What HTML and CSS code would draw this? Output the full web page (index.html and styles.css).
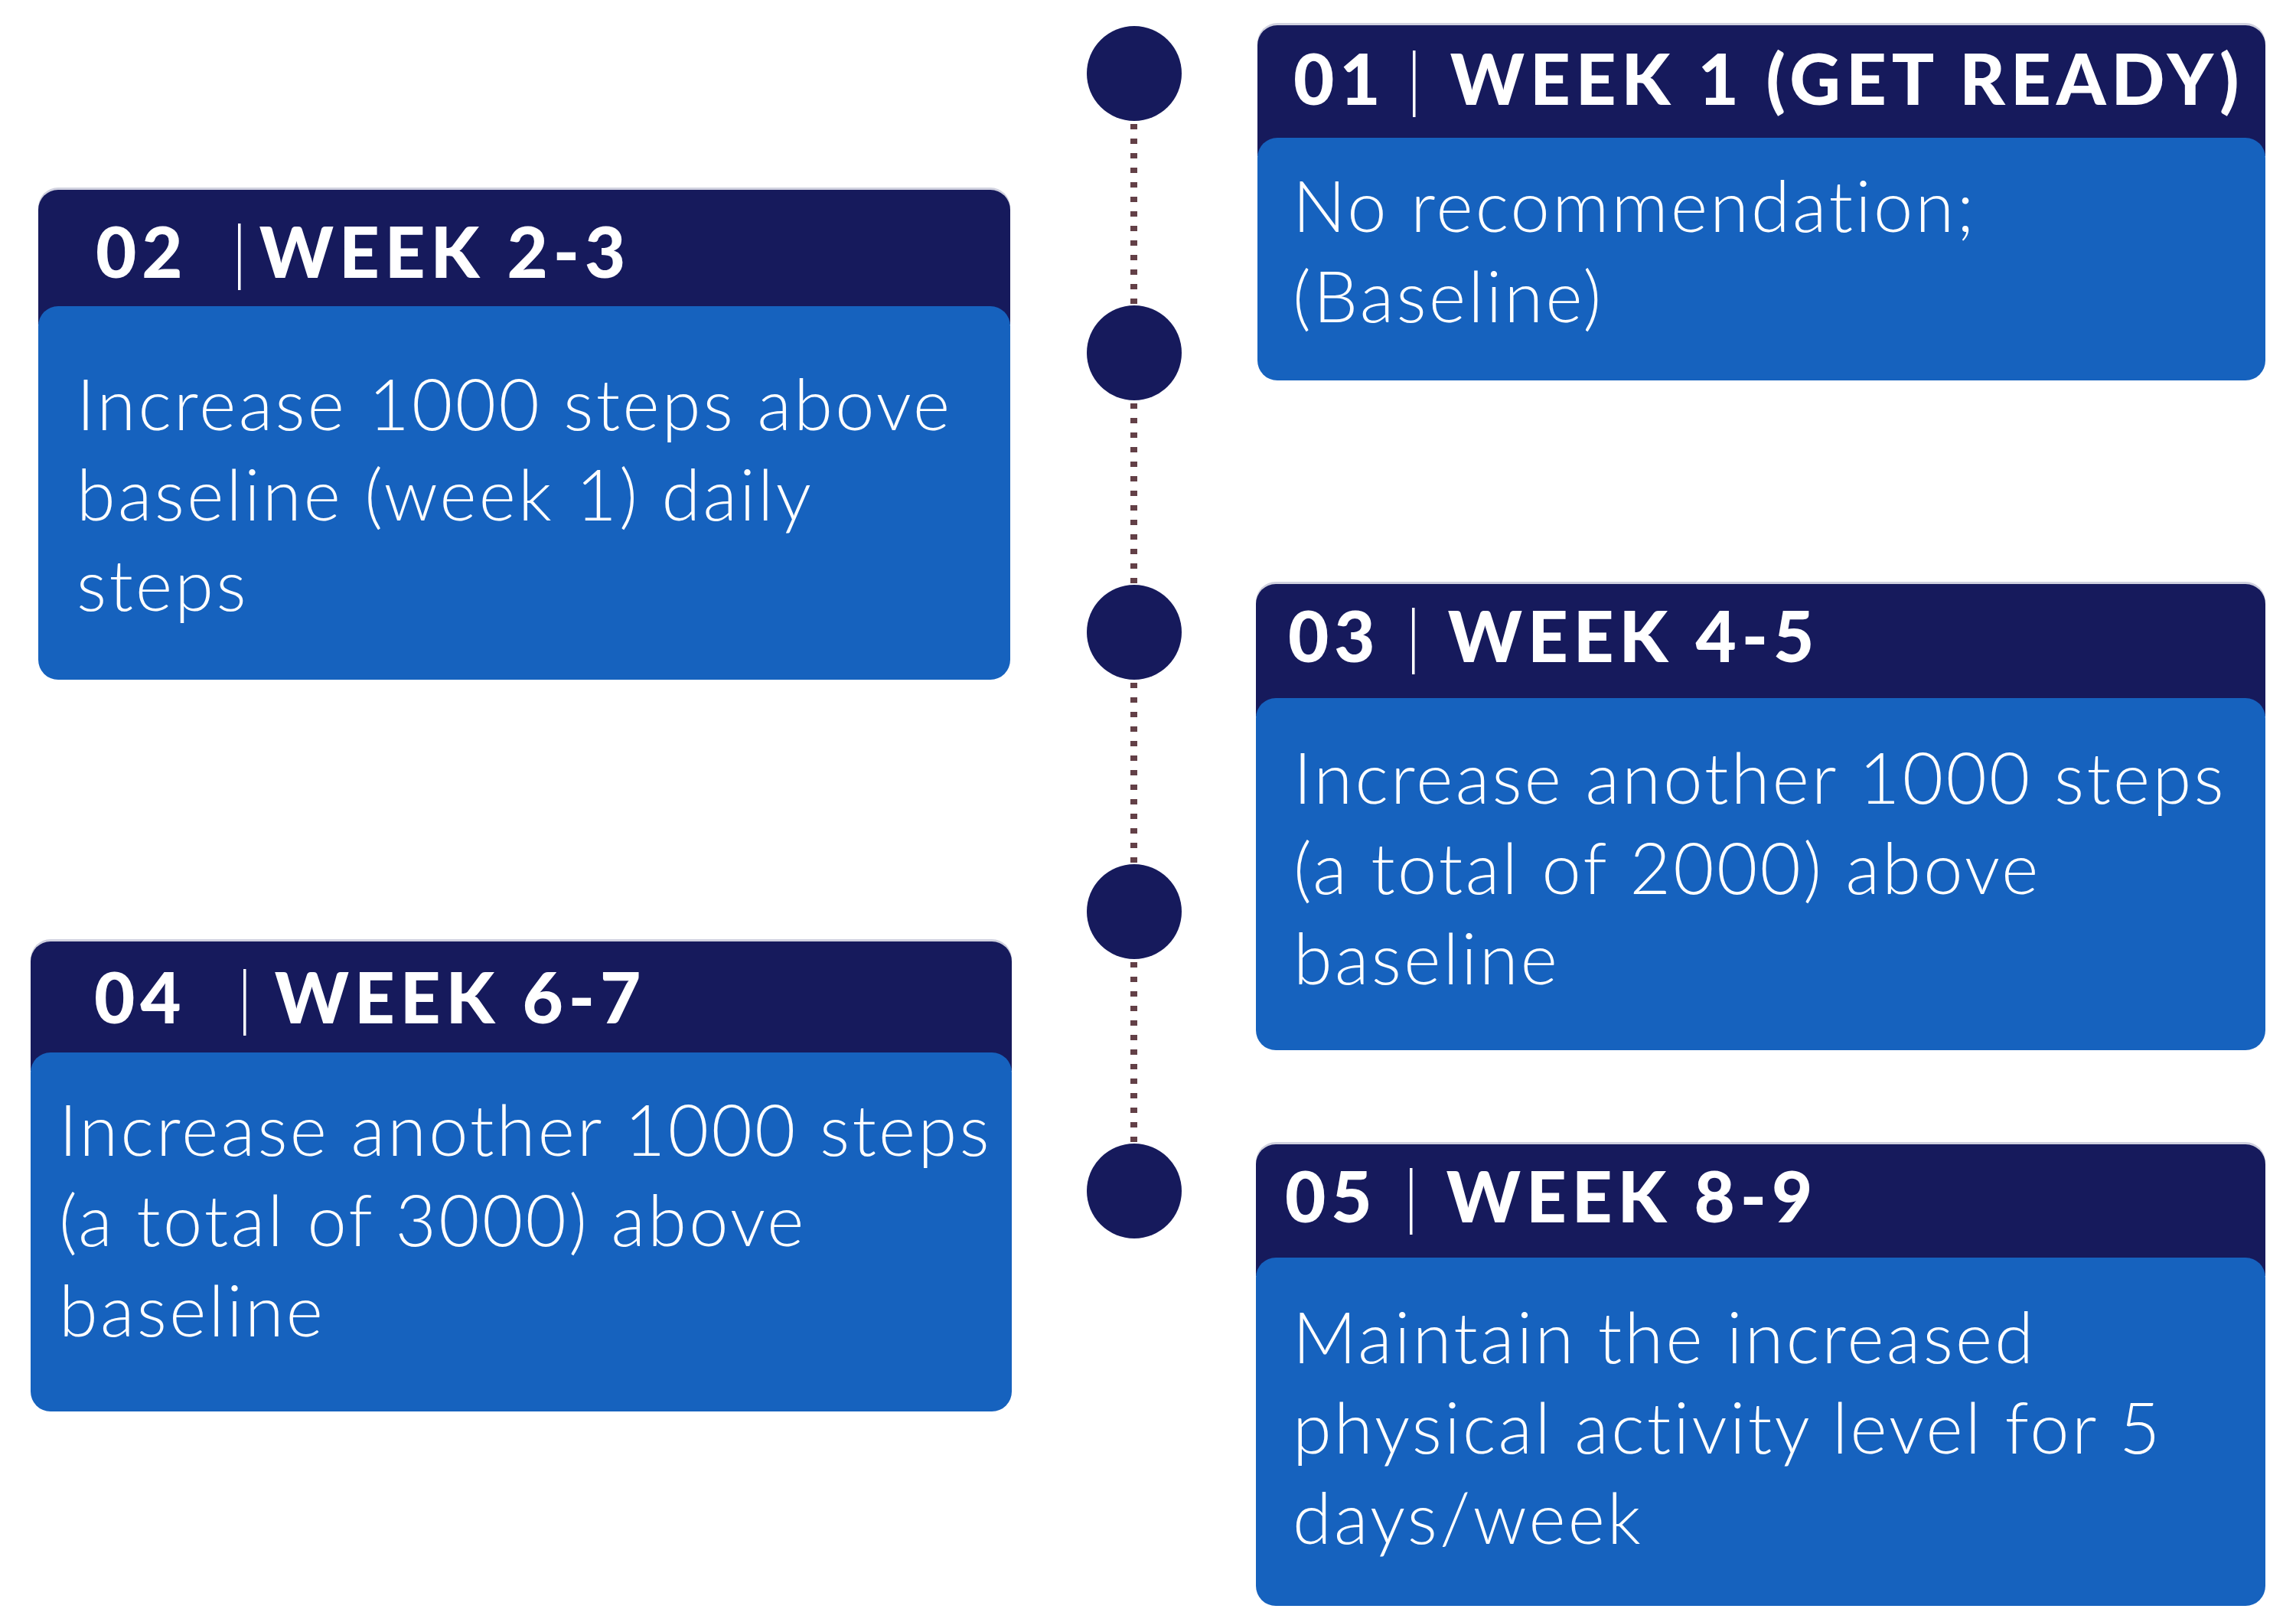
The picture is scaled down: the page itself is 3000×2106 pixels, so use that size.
FILE: index.html
```html
<!DOCTYPE html>
<html lang="en">
<head>
<meta charset="utf-8">
<title>Step increase plan</title>
<link rel="stylesheet" href="styles.css">
</head>
<body>
<main class="timeline">
  <section class="col col-left">
    <article class="card card-2">
      <header class="card-head"><span class="num">02</span><span class="bar">|</span><span class="title">WEEK 2-3</span></header>
      <div class="card-body">Increase 1000 steps above<br>baseline (week 1) daily<br>steps</div>
    </article>
    <article class="card card-4">
      <header class="card-head"><span class="num">04</span><span class="bar">|</span><span class="title">WEEK 6-7</span></header>
      <div class="card-body">Increase another 1000 steps<br>(a total of 3000) above<br>baseline</div>
    </article>
  </section>

  <div class="track">
    <span class="dot"></span>
    <span class="dash"></span>
    <span class="dot"></span>
    <span class="dash"></span>
    <span class="dot"></span>
    <span class="dash"></span>
    <span class="dot"></span>
    <span class="dash"></span>
    <span class="dot"></span>
  </div>

  <section class="col col-right">
    <article class="card card-1">
      <header class="card-head"><span class="num">01</span><span class="bar">|</span><span class="title">WEEK 1 (GET READY)</span></header>
      <div class="card-body">No recommendation;<br>(Baseline)</div>
    </article>
    <article class="card card-3">
      <header class="card-head"><span class="num">03</span><span class="bar">|</span><span class="title">WEEK 4-5</span></header>
      <div class="card-body">Increase another 1000 steps<br>(a total of 2000) above<br>baseline</div>
    </article>
    <article class="card card-5">
      <header class="card-head"><span class="num">05</span><span class="bar">|</span><span class="title">WEEK 8-9</span></header>
      <div class="card-body">Maintain the increased<br>physical activity level for 5<br>days/week</div>
    </article>
  </section>
</main>
</body>
</html>
```

FILE: styles.css
```css
html, body {
  margin: 0;
  padding: 0;
  background: #ffffff;
}

body {
  font-family: Lato, "Open Sans", "Liberation Sans", sans-serif;
  color: #ffffff;
}

.timeline {
  display: grid;
  grid-template-columns: 1322px 319px 1319px;
  width: 3000px;
  height: 2106px;
}

.col {
  display: flex;
  flex-direction: column;
}

.col-left {
  align-items: flex-end;
}

.col-right {
  align-items: flex-start;
}

/* ---------- cards ---------- */
.card {
  display: flex;
  flex-direction: column;
  box-sizing: border-box;
}

.card-head {
  box-sizing: border-box;
  background: #161a5c;
  border-radius: 26px 26px 0 0;
  box-shadow: 0 -3px 0 rgba(170, 172, 196, 0.55);
  font-weight: 900;
  font-size: 92px;
  letter-spacing: 7px;
  line-height: 1;
  white-space: nowrap;
  display: flex;
  align-items: flex-start;
}

.card-head .bar {
  font-weight: 300;
}

.card-body {
  flex: 1;
  margin-top: -24px;
  position: relative;
  background: #1662be;
  border-radius: 26px;
  font-weight: 300;
  font-size: 92px;
  letter-spacing: 3.3px;
  line-height: 118px;
  white-space: nowrap;
}

/* card 1 */
.card-1 { margin-top: 33px; margin-left: 2px; width: 1317px; height: 464px; }
.card-1 .card-head { height: 171px; padding: 23px 0 0 47px; }
.card-1 .bar { margin: 0 29px 0 26px; }
.card-1 .card-body { padding: 29px 0 0 46px; }

/* card 2 */
.card-2 { margin-top: 248px; margin-right: 2px; width: 1270px; height: 640px; }
.card-2 .card-head { height: 176px; padding: 34px 0 0 75px; }
.card-2 .bar { margin: 0 8px 0 56px; }
.card-2 .card-body { padding: 68px 0 0 50px; }

/* card 3 */
.card-3 { margin-top: 266px; width: 1319px; height: 609px; }
.card-3 .card-head { height: 173px; padding: 21px 0 0 42px; }
.card-3 .bar { margin: 0 27px 0 32px; }
.card-3 .card-body { padding: 44px 0 0 49px; }

/* card 4 */
.card-4 { margin-top: 342px; width: 1282px; height: 614px; }
.card-4 .card-head { height: 169px; padding: 26px 0 0 83px; }
.card-4 .bar { margin: 0 21px 0 65px; }
.card-4 .card-body { padding: 41px 0 0 37px; }

/* card 5 */
.card-5 { margin-top: 123px; width: 1319px; height: 603px; }
.card-5 .card-head { height: 172px; padding: 21px 0 0 38px; }
.card-5 .bar { margin: 0 28px 0 33px; }
.card-5 .card-body { padding: 44px 0 0 48px; }

/* ---------- timeline track ---------- */
.track {
  display: flex;
  flex-direction: column;
  align-items: center;
  padding-top: 34px;
}

.dot {
  width: 124px;
  height: 124px;
  border-radius: 50%;
  background: #161a5c;
  flex: none;
}

.dash {
  width: 9px;
  height: 241px;
  flex: none;
  background: repeating-linear-gradient(to bottom, #634047 0 7px, transparent 7px 19px);
  background-position: 0 4px;
}
```
